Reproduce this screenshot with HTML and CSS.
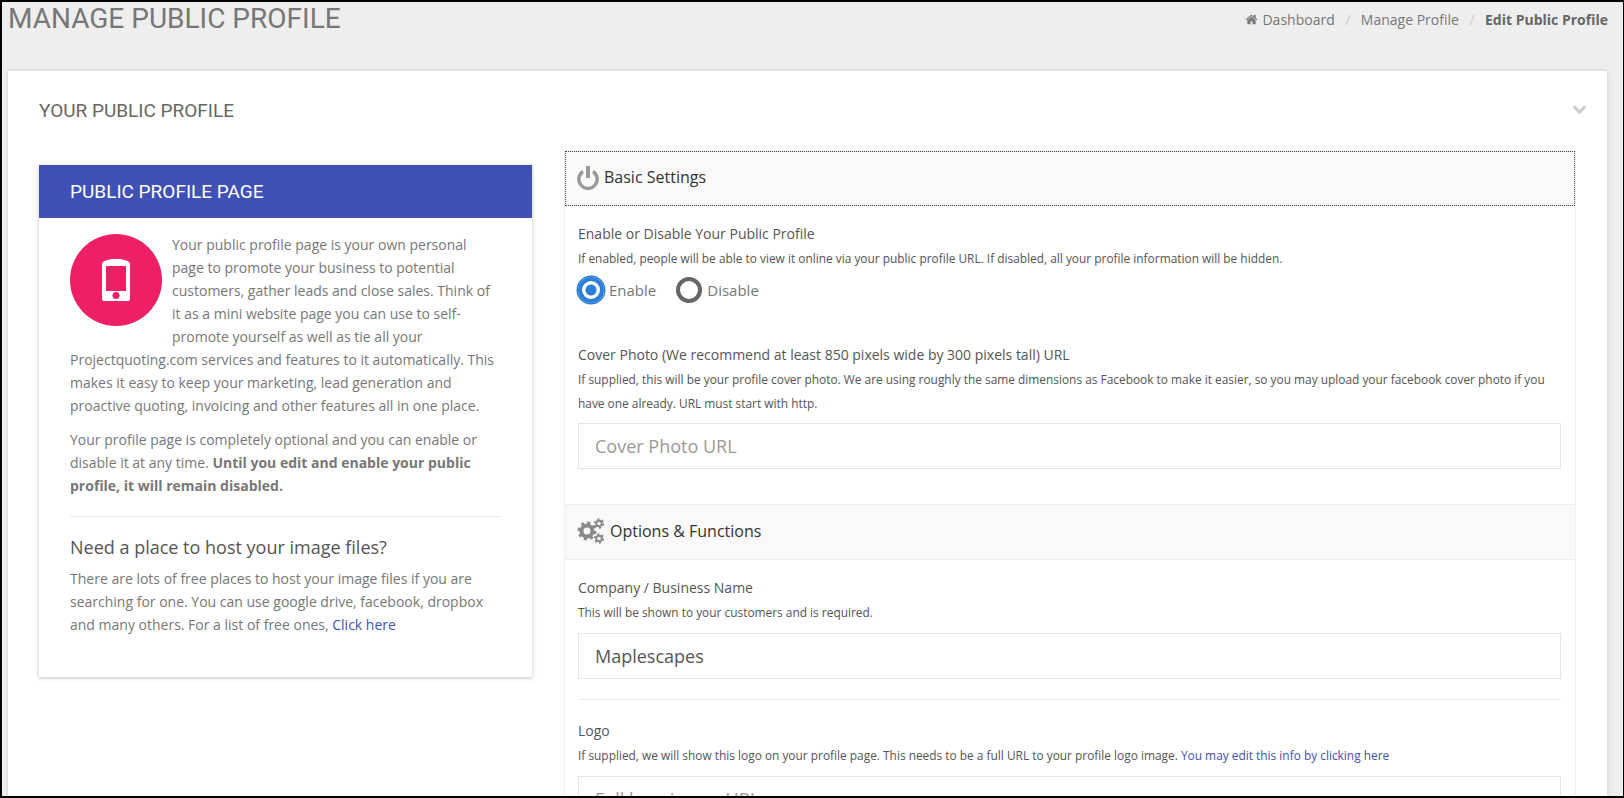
FILE: index.html
```html
<!DOCTYPE html>
<html lang="en">
<head>
    <meta charset="UTF-8">
    <meta name="viewport" content="width=device-width, initial-scale=1.0">
    <title>Manage Public Profile</title>
    <link rel="stylesheet" href="styles.css">
</head>
<body>
    <div class="page-head">
        <h1>MANAGE PUBLIC PROFILE</h1>
        <div class="breadcrumb">
            <svg class="home-icon" viewBox="0 0 1792 1792"><path d="M1472 992v480q0 26-19 45t-45 19h-384v-384h-256v384h-384q-26 0-45-19t-19-45v-480q0-1 .5-3t.5-3l575-474 575 474q1 2 1 6zm223-69l-62 74q-8 9-21 11h-3q-13 0-21-7l-692-577-692 577q-12 8-24 7-13-2-21-11l-62-74q-8-10-7-23.5t11-21.5l719-599q32-26 76-26t76 26l244 204v-195q0-14 9-23t23-9h192q14 0 23 9t9 23v408l219 182q10 8 11 21.5t-7 23.5z"/></svg>
            <a href="#">Dashboard</a>
            <span class="sep">/</span>
            <a href="#">Manage Profile</a>
            <span class="sep">/</span>
            <b>Edit Public Profile</b>
        </div>
    </div>

    <div class="card">
        <div class="card-title">
            <h2>YOUR PUBLIC PROFILE</h2>
            <svg class="chevron" viewBox="0 0 1792 1792"><path d="M1683 808l-742 741q-19 19-45 19t-45-19l-742-741q-19-19-19-45.5t19-45.5l166-165q19-19 45-19t45 19l531 531 531-531q19-19 45-19t45 19l166 165q19 19 19 45.5t-19 45.5z"/></svg>
        </div>

        <div class="columns">
            <div class="info-panel">
                <div class="info-head">PUBLIC PROFILE PAGE</div>
                <div class="info-body">
                    <div class="round-icon">
                        <svg viewBox="0 0 28 42" width="28" height="42">
                            <path fill="#fff" d="M0 5C0 2 6 0 14 0s14 2 14 5v35q0 2-2 2H2q-2 0-2-2z"/>
                            <rect x="4" y="7" width="20" height="25" fill="#ed1f67"/>
                            <circle cx="14" cy="36.500" r="3.500" fill="#ed1f67"/>
                        </svg>
                    </div>
                    <p>Your public profile page is your own personal page to promote your business to potential customers, gather leads and close sales. Think of it as a mini website page you can use to self-promote yourself as well as tie all your Projectquoting.com services and features to it automatically. This makes it easy to keep your marketing, lead generation and proactive quoting, invoicing and other features all in one place.</p>
                    <p>Your profile page is completely optional and you can enable or disable it at any time. <b>Until you edit and enable your public profile, it will remain disabled.</b></p>
                    <hr>
                    <h3>Need a place to host your image files?</h3>
                    <p>There are lots of free places to host your image files if you are searching for one. You can use google drive, facebook, dropbox and many others. For a list of free ones, <a href="#">Click here</a></p>
                </div>
            </div>

            <div class="settings">
                <div class="section-head focused">
                    <svg class="head-icon" viewBox="0 0 24 24" width="24" height="24">
                        <path d="M7 5.500a9.200 9.200 0 1 0 10 0" fill="none" stroke="#999" stroke-width="3.400"/>
                        <rect x="10" y="0" width="4" height="12" rx="1" fill="#999"/>
                    </svg>
                    Basic Settings
                </div>
                <div class="section-body">
                    <div class="field">
                        <label>Enable or Disable Your Public Profile</label>
                        <small>If enabled, people will be able to view it online via your public profile URL. If disabled, all your profile information will be hidden.</small>
                        <div class="radios">
                            <span class="radio on"></span><span class="radio-text">Enable</span>
                            <span class="radio"></span><span class="radio-text">Disable</span>
                        </div>
                    </div>
                    <div class="field cover">
                        <label>Cover Photo (We recommend at least 850 pixels wide by 300 pixels tall) URL</label>
                        <small>If supplied, this will be your profile cover photo. We are using roughly the same dimensions as Facebook to make it easier, so you may upload your facebook cover photo if you have one already. URL must start with http.</small>
                        <input type="text" placeholder="Cover Photo URL">
                    </div>
                </div>

                <div class="section-head">
                    <svg class="head-icon" viewBox="0 0 28 26" width="28" height="26">
                        <g fill="none" stroke="#8a8a8a">
                            <circle cx="10" cy="13" r="5.500" stroke-width="4"/>
                            <circle cx="10" cy="13" r="8" stroke-width="3" stroke-dasharray="3.100 3.180"/>
                            <circle cx="22" cy="5.500" r="2.800" stroke-width="2"/>
                            <circle cx="22" cy="5.500" r="4.300" stroke-width="1.800" stroke-dasharray="2.100 2.400"/>
                            <circle cx="22" cy="20.500" r="2.800" stroke-width="2"/>
                            <circle cx="22" cy="20.500" r="4.300" stroke-width="1.800" stroke-dasharray="2.100 2.400"/>
                        </g>
                    </svg>
                    Options &amp; Functions
                </div>
                <div class="section-body">
                    <div class="field">
                        <label>Company / Business Name</label>
                        <small>This will be shown to your customers and is required.</small>
                        <input type="text" value="Maplescapes">
                    </div>
                    <hr>
                    <div class="field">
                        <label>Logo</label>
                        <small>If supplied, we will show this logo on your profile page. This needs to be a full URL to your profile logo image. <a href="#">You may edit this info by clicking here</a></small>
                        <input type="text" placeholder="Full logo image URL">
                    </div>
                </div>
            </div>
        </div>
    </div>
</body>
</html>
```

FILE: styles.css
```css
* {
    box-sizing: border-box;
    margin: 0;
    padding: 0;
}

html, body {
    height: 798px;
    overflow: hidden;
}

body {
    font-family: 'Open Sans', sans-serif;
    font-size: 14px;
    line-height: 23px;
    color: #777;
    background-color: #eee;
    border: 2px solid #000;
    border-right-width: 1px;
    padding: 0 16px 0 6px;
}

a {
    color: #3f51b5;
    text-decoration: none;
}

.page-head {
    display: flex;
    justify-content: space-between;
    height: 69px;
}

h1 {
    font-family: Roboto, sans-serif;
    font-size: 28px;
    font-weight: 400;
    line-height: 34px;
    color: #777;
}

.breadcrumb {
    display: flex;
    align-items: center;
    height: 23px;
    margin: 6px -1px 0 0;
    color: #777;
}

.breadcrumb a {
    color: #777;
}

.breadcrumb b {
    color: #666;
}

.home-icon {
    width: 13px;
    height: 13px;
    fill: #777;
    margin-right: 4px;
}

.sep {
    color: #ccc;
    margin: 0 10.5px;
}

.card {
    background-color: #fff;
    height: 800px;
    padding: 0 31px;
    box-shadow: 0 0 4px rgba(0, 0, 0, 0.15);
}

.card-title {
    display: flex;
    justify-content: space-between;
    align-items: center;
    height: 78px;
}

h2 {
    font-family: Roboto, sans-serif;
    font-size: 19px;
    font-weight: 400;
    color: #666;
}

.chevron {
    width: 15px;
    height: 15px;
    fill: #ccc;
    margin: 0 -11px 4px 0;
}

.columns {
    display: flex;
    align-items: flex-start;
    justify-content: space-between;
    margin-top: 2px;
}

.info-panel {
    width: 493px;
    margin-top: 14px;
    box-shadow: 0 1px 4px rgba(0, 0, 0, 0.25);
}

.info-head {
    height: 53px;
    padding-left: 31px;
    font-family: Roboto, sans-serif;
    font-size: 19px;
    line-height: 53px;
    color: #fff;
    background-color: #3f51b5;
}

.info-body {
    padding: 15px 31px 30px;
}

.info-body p {
    margin-bottom: 11px;
}

.info-body hr {
    margin: 19px 0 17px;
}

.round-icon {
    float: left;
    display: flex;
    align-items: center;
    justify-content: center;
    width: 92px;
    height: 92px;
    margin: 1px 10px 10px 0;
    border-radius: 50%;
    background-color: #ed1f67;
}

h3 {
    font-size: 18px;
    font-weight: 400;
    line-height: 26px;
    color: #555;
    margin-bottom: 7px;
}

hr {
    border: none;
    border-top: 1px solid #eee;
    clear: both;
}

.settings {
    width: 1012px;
    border: 1px solid #eee;
    border-top: none;
}

.section-head {
    display: flex;
    align-items: center;
    gap: 5px;
    height: 56px;
    padding: 0 0 2px 12px;
    font-size: 16px;
    color: #333;
    background-color: #f9f9f9;
    border-top: 1px solid #eee;
    border-bottom: 1px solid #eee;
}

.section-head.focused {
    height: 55px;
    gap: 4px;
    padding-left: 11px;
    outline: 1px dotted #444;
    outline-offset: -1px;
}

.section-body {
    padding: 16px 14px 0 13px;
}

.field {
    display: flex;
    flex-direction: column;
}

.field label {
    color: #555;
    line-height: 24px;
}

.field small {
    font-size: 11.9px;
    line-height: 24px;
    color: #555;
}

.radios {
    display: flex;
    align-items: center;
    height: 32px;
    margin-top: 4px;
    font-size: 15px;
}

.radio {
    width: 26px;
    height: 26px;
    margin-right: 5px;
    border: 4px solid #666;
    border-radius: 50%;
}

.radio.on {
    border-color: #2d7fd6;
    background: radial-gradient(circle, #2d7fd6 0 5px, #fff 6px);
    box-shadow: 0 0 0 1.5px #2d7fd6;
}

.radio-text {
    margin-right: 20px;
}

.cover {
    margin-top: 37px;
}

input {
    width: 100%;
    height: 46px;
    margin-top: 9px;
    padding: 0 16px;
    font-family: 'Open Sans', sans-serif;
    font-size: 18px;
    color: #555;
    border: 1px solid #e5e5e5;
}

input::placeholder {
    color: #999;
}

.cover input {
    margin: 8px 0 35px;
}

.section-body hr {
    margin: 20px 0 19px;
}
```
